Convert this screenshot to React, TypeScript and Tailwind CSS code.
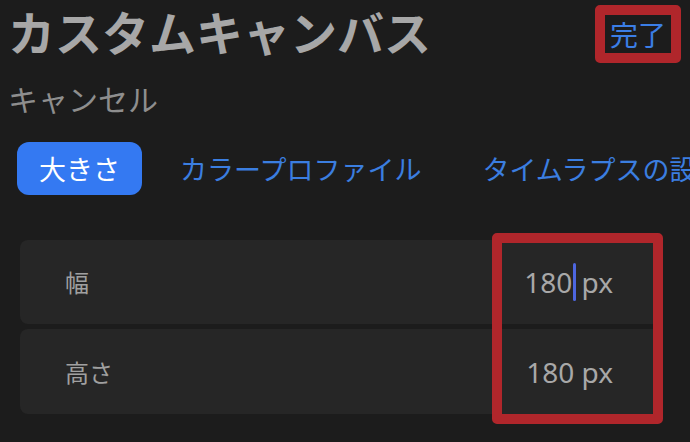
export default function App() {
  const jp = { fontFamily: '"Noto Sans CJK JP", "Noto Sans", sans-serif' };
  const num = { fontFamily: '"Noto Sans", "Noto Sans CJK JP", sans-serif' };

  return (
    <div className="relative h-[442px] w-[690px] overflow-hidden bg-[#1c1c1c]" style={jp}>
      {/* Header */}
      <div className="flex items-start justify-between pl-[8px] pr-[9px] pt-[5px]">
        <h1 className="-mt-[2px] shrink-0 whitespace-nowrap text-[47px] font-bold leading-[56px] text-[#a7a7a7]">
          カスタムキャンバス
        </h1>
        <div className="flex h-[58px] w-[86px] shrink-0 items-center justify-center rounded-[5px] border-[10px] border-[#b0262b]">
          <span className="text-[28px] leading-[34px] text-[#3b7ee6]">完了</span>
        </div>
      </div>

      <div className="mt-[20px] pl-[8px] text-[30px] leading-[30px] text-[#8e8e8e]">キャンセル</div>

      {/* Tabs */}
      <div className="mt-[29px] flex items-center overflow-hidden pl-[17px] text-[27px] leading-[27px]">
        <div className="flex h-[53px] w-[125px] shrink-0 items-center justify-center rounded-[12px] bg-[#3479f2] text-white">
          大きさ
        </div>
        <span className="ml-[38px] shrink-0 whitespace-nowrap text-[#3b7ee0]">カラープロファイル</span>
        <span className="ml-[61px] shrink-0 whitespace-nowrap text-[#3b7ee0]">タイムラプスの設定</span>
      </div>

      {/* Size rows */}
      <div className="relative mt-[45px] flex flex-col gap-[5px] pl-[20px] pr-[30px]">
        <div className="flex h-[84px] items-center justify-between rounded-[8px] bg-[#262626] pl-[45px] pr-[47px]">
          <span className="text-[24px] text-[#a0a0a0]">幅</span>
          <span className="text-[28px] text-[#a8a8a8]" style={num}>
            <span className="relative mr-[2px]">
              180
              <span className="absolute right-[-4px] top-1/2 h-[38px] w-[3px] -translate-y-1/2 rounded-full bg-[#4d66e0]" />
            </span>{' '}
            px
          </span>
        </div>
        <div className="flex h-[85px] items-center justify-between rounded-[8px] bg-[#262626] pl-[45px] pr-[47px]">
          <span className="text-[24px] text-[#a0a0a0]">高さ</span>
          <span className="text-[28px] text-[#a8a8a8]" style={num}>
            180 px
          </span>
        </div>

        {/* annotation */}
        <div className="absolute left-[492px] top-[-7px] h-[191px] w-[171px] rounded-[5px] border-[10px] border-[#b0262b]" />
      </div>
    </div>
  );
}
